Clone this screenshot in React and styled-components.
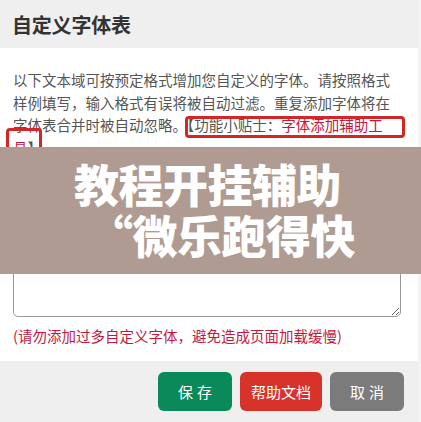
import React from 'react'
import styled, { createGlobalStyle } from 'styled-components'

const GlobalStyle = createGlobalStyle`
	* {
		box-sizing: border-box;
	}
	body {
		margin: 0;
		background: #f3f3f3;
		font-family: 'Noto Sans CJK SC', 'Noto Sans', sans-serif;
	}
`

const Page = styled.div`
	position: relative;
	width: 421px;
	height: 422px;
	overflow: hidden;
`

const Modal = styled.div`
	width: 418px;
	display: flex;
	flex-direction: column;
	background: white;
`

const Header = styled.div`
	height: 48px;
	display: flex;
	align-items: center;
	padding-left: 12px;
	background: #efefef;
	h2 {
		margin: 0;
		font-size: 20px;
		font-weight: 700;
		color: #333;
		letter-spacing: -0.2px;
	}
`

const Body = styled.div`
	position: relative;
	display: flex;
	flex-direction: column;
	padding: 21px 17px 0 13px;
	height: 313px;
`

const Intro = styled.p`
	margin: 0;
	width: 385px;
	font-size: 14.5px;
	line-height: 22.5px;
	color: #555;
`

const Tip = styled.span`
	color: #c4173f;
`

const FontArea = styled.textarea`
	margin-top: 8px;
	width: 388px;
	height: 150px;
	border: 1px solid #999;
	border-radius: 5px;
	background: white;
	resize: vertical;
	outline: none;
`

const Note = styled.p`
	margin: 9px 0 0;
	font-size: 14.5px;
	line-height: 20px;
	color: #c4173f;
`

const Mark = styled.div`
	position: absolute;
	border: 3px solid #d42626;
	border-radius: 4px;
`

const Footer = styled.div`
	height: 61px;
	display: flex;
	justify-content: flex-end;
	align-items: flex-start;
	gap: 8px;
	padding: 11px 14px 0 0;
	background: #efefef;
`

const Button = styled.button`
	width: ${(p) => p.$w}px;
	height: 39px;
	border: none;
	border-radius: 6px;
	background: ${(p) => p.$bg};
	color: white;
	font-family: inherit;
	font-size: 15px;
	letter-spacing: ${(p) => (p.$spaced ? '4px' : '0')};
	text-indent: ${(p) => (p.$spaced ? '4px' : '0')};
	cursor: pointer;
`

const Banner = styled.div`
	position: absolute;
	left: 0;
	top: 147px;
	width: 421px;
	height: 127px;
	background: #b09b92;
	color: white;
	font-size: 45px;
	font-weight: 900;
	line-height: 51px;
	padding-top: 11px;
`

const BannerLine = styled.div`
	margin-left: ${(p) => p.$indent}px;
	white-space: nowrap;
	letter-spacing: -0.5px;
`

export default function App() {
	return (
		<Page>
			<GlobalStyle />
			<Modal>
				<Header>
					<h2>自定义字体表</h2>
				</Header>
				<Body>
					<Intro>
						以下文本域可按预定格式增加您自定义的字体。请按照格式样例填写，输入格式有误将被自动过滤。重复添加字体将在字体表合并时被自动忽略。【功能小贴士：
						<Tip>字体添加辅助工具</Tip>】
					</Intro>
					<FontArea />
					<Note>(请勿添加过多自定义字体，避免造成页面加载缓慢)</Note>
					<Mark style={{ left: 185, top: 68, width: 220, height: 22 }} />
					<Mark style={{ left: 6, top: 80, width: 36, height: 30 }} />
				</Body>
				<Footer>
					<Button $w={74} $bg='#0a8a5b' $spaced>
						保存
					</Button>
					<Button $w={82} $bg='#d8332a'>
						帮助文档
					</Button>
					<Button $w={74} $bg='#7b7b7b' $spaced>
						取消
					</Button>
				</Footer>
			</Modal>
			<Banner>
				<BannerLine $indent={74}>教程开挂辅助</BannerLine>
				<BannerLine $indent={88}>“微乐跑得快</BannerLine>
			</Banner>
		</Page>
	)
}
